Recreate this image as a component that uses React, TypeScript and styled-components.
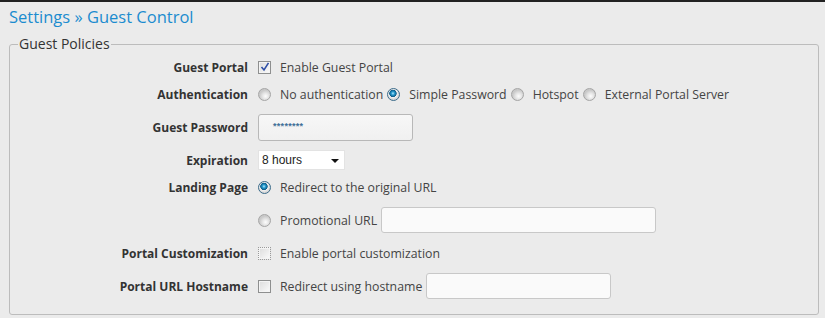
import * as React from "react";
import styled, { createGlobalStyle } from "styled-components";

const GlobalStyle = createGlobalStyle`
  html, body {
    margin: 0;
    padding: 0;
    background: #ebebeb;
  }
  body {
    font-family: "Open Sans", "Liberation Sans", sans-serif;
    font-size: 12px;
    color: #444;
  }
`;

const TopBar = styled.div`
  height: 2px;
  background: #222;
`;

const Page = styled.div`
  padding: 5px 6px 0 9px;
`;

const Title = styled.h1`
  margin: 0;
  font-size: 16.5px;
  font-weight: normal;
  color: #1b8ccf;
  line-height: 20px;
`;

const Fieldset = styled.fieldset`
  margin: 9px 0 0 0;
  padding: 5px 0 12px 0;
  border: 1px solid #bcbcbc;
  border-radius: 3px;
`;

const Legend = styled.legend`
  margin-left: 8px;
  padding: 0 1px;
  font-size: 14px;
  line-height: 16px;
  color: #333;
`;

const Form = styled.div`
  display: grid;
  grid-template-columns: 238px 1fr;
  column-gap: 10px;
  row-gap: 7px;
`;

const Label = styled.div<{ $tall?: boolean }>`
  height: ${(p) => (p.$tall ? 32 : 20)}px;
  display: flex;
  align-items: center;
  justify-content: flex-end;
  font-weight: bold;
  color: #333;
`;

const Controls = styled.div<{ $tall?: boolean }>`
  height: ${(p) => (p.$tall ? 32 : 20)}px;
  display: flex;
  align-items: center;
`;

const Box = styled.span<{ $dotted?: boolean }>`
  position: relative;
  width: 11px;
  height: 11px;
  flex: none;
  border: 1px solid ${(p) => (p.$dotted ? "#9a9a9a" : "#8e8f8f")};
  border-style: ${(p) => (p.$dotted ? "dotted" : "solid")};
  background: linear-gradient(135deg, #dcdcdc, #fbfbfb);
  box-shadow: inset 0 0 0 1px #f4f4f4;
`;

const Check = styled.svg`
  position: absolute;
  left: 1px;
  top: 0px;
`;

const Radio = styled.span<{ $checked?: boolean }>`
  width: 11px;
  height: 11px;
  flex: none;
  border-radius: 50%;
  border: 1px solid ${(p) => (p.$checked ? "#3b6b8a" : "#a5a5a5")};
  background: ${(p) =>
    p.$checked
      ? "radial-gradient(circle at 45% 40%, #bfe7f6 0, #2aa0d4 1.5px, #0c5b87 3.4px, #f0f0f0 4px, #d8d8d8 6px)"
      : "radial-gradient(circle at 60% 65%, #fdfdfd 0, #e6e6e6 3px, #c9c9c9 6px)"};
`;

const OptionText = styled.span<{ $gap?: number }>`
  margin-left: 9px;
  margin-right: ${(p) => p.$gap ?? 0}px;
  font-size: 12.3px;
  color: #444;
  white-space: nowrap;
`;

const TextInput = styled.div<{ $width: number; $gap?: number }>`
  box-sizing: border-box;
  width: ${(p) => p.$width}px;
  height: 26px;
  margin-left: ${(p) => p.$gap ?? 0}px;
  border: 1px solid #c8c8c8;
  border-radius: 3px;
  background: #fafafa;
`;

const PasswordInput = styled.div`
  box-sizing: border-box;
  width: 155px;
  height: 27px;
  padding: 6px 0 0 14px;
  border: 1px solid #b8b8b8;
  border-radius: 3px;
  background: linear-gradient(#f7f7f7, #f0f0f0);
  font-family: "Liberation Sans", Arial, sans-serif;
  font-size: 9px;
  font-weight: bold;
  letter-spacing: 0.3px;
  color: #3f6f98;
`;

const Select = styled.div`
  box-sizing: border-box;
  width: 87px;
  height: 20px;
  padding: 0 0 0 3px;
  display: flex;
  align-items: center;
  justify-content: space-between;
  background: #fff;
  border: 1px solid #e3e3e3;
  font-family: "Liberation Sans", Arial, sans-serif;
  font-size: 12px;
  color: #222;
`;

const Caret = styled.span`
  width: 0;
  height: 0;
  margin-right: 5px;
  margin-top: 2px;
  border-left: 4px solid transparent;
  border-right: 4px solid transparent;
  border-top: 4px solid #111;
`;

const CheckMark = () => (
  <Check width="10" height="10" viewBox="0 0 10 10">
    <path d="M1.5 5 L4 8 L8.5 0.8" fill="none" stroke="#2f4fa6" strokeWidth="1.6" />
  </Check>
);

const App: React.FC = () => {
  return (
    <>
      <GlobalStyle />
      <TopBar />
      <Page>
        <Title>Settings » Guest Control</Title>
        <Fieldset>
          <Legend>Guest Policies</Legend>
          <Form>
            <Label>Guest Portal</Label>
            <Controls>
              <Box>
                <CheckMark />
              </Box>
              <OptionText>Enable Guest Portal</OptionText>
            </Controls>

            <Label>Authentication</Label>
            <Controls>
              <Radio />
              <OptionText $gap={4}>No authentication</OptionText>
              <Radio $checked />
              <OptionText $gap={4}>Simple Password</OptionText>
              <Radio />
              <OptionText $gap={4}>Hotspot</OptionText>
              <Radio />
              <OptionText>External Portal Server</OptionText>
            </Controls>

            <Label $tall>Guest Password</Label>
            <Controls $tall>
              <PasswordInput>********</PasswordInput>
            </Controls>

            <Label>Expiration</Label>
            <Controls>
              <Select>
                8 hours
                <Caret />
              </Select>
            </Controls>

            <Label>Landing Page</Label>
            <Controls>
              <Radio $checked />
              <OptionText>Redirect to the original URL</OptionText>
            </Controls>

            <Label $tall />
            <Controls $tall>
              <Radio />
              <OptionText>Promotional URL</OptionText>
              <TextInput $width={275} $gap={4} />
            </Controls>

            <Label>Portal Customization</Label>
            <Controls>
              <Box $dotted />
              <OptionText>Enable portal customization</OptionText>
            </Controls>

            <Label $tall>Portal URL Hostname</Label>
            <Controls $tall>
              <Box />
              <OptionText>Redirect using hostname</OptionText>
              <TextInput $width={185} $gap={4} />
            </Controls>
          </Form>
        </Fieldset>
      </Page>
    </>
  );
};

export default App;
